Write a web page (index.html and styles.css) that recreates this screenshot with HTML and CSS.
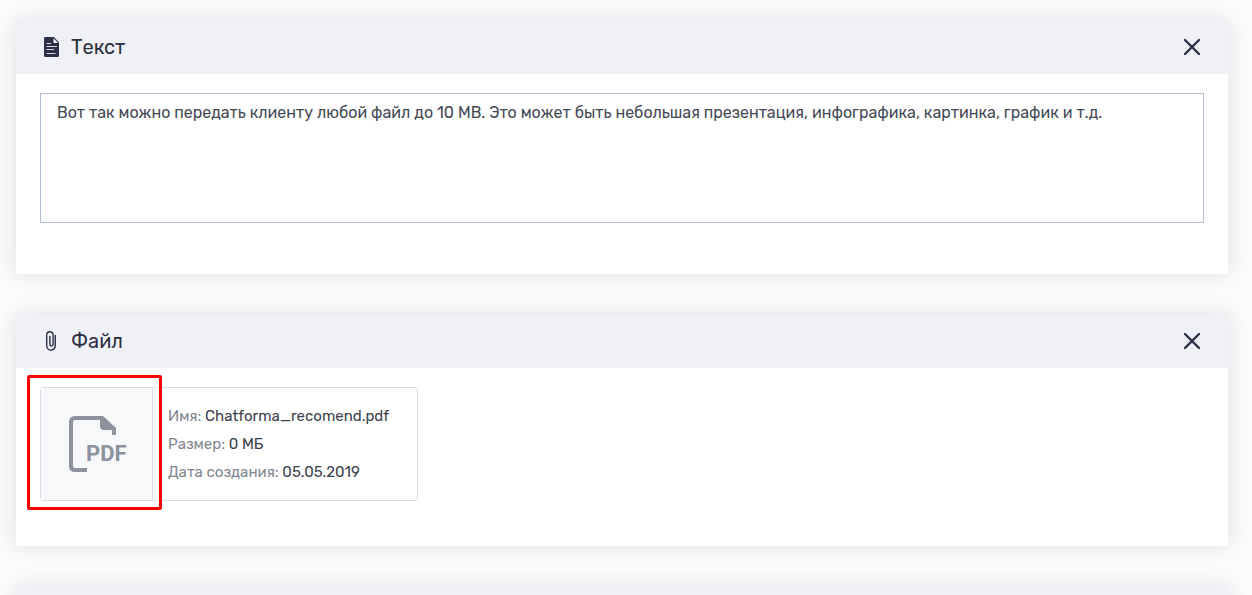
FILE: index.html
```html
<!DOCTYPE html>
<html lang="ru">
<head>
<meta charset="utf-8">
<meta name="viewport" content="width=device-width, initial-scale=1">
<title>Chatforma</title>
<link rel="stylesheet" href="styles.css">
</head>
<body>
<main class="blocks">
  <section class="card">
    <header class="card-header">
      <svg class="card-icon" viewBox="0 0 16 20" aria-hidden="true">
        <path fill="#2c2f48" d="M1.500 0H10L15 5.500V18.500a1.500 1.500 0 0 1-1.500 1.500h-12A1.500 1.500 0 0 1 0 18.500v-17A1.500 1.500 0 0 1 1.500 0z"/>
        <path fill="#f0f1f7" d="M9.500 1.200V6h4.700z"/>
        <path stroke="#d4d6e0" stroke-width="1" fill="none" d="M2.500 6.500H7M2.500 9.500H13M2.500 12.500H10M2.500 16.500H11.500"/>
      </svg>
      <h2 class="card-title" id="text-title">Текст</h2>
      <button class="close" type="button" aria-label="Закрыть">
        <svg class="close-icon" viewBox="0 0 18 18" aria-hidden="true"><path stroke-width="2.400" d="M2 2L16 16M16 2L2 16"/></svg>
      </button>
    </header>
    <div class="card-body">
      <textarea class="message" aria-labelledby="text-title" spellcheck="false">Вот так можно передать клиенту любой файл до 10 MB. Это может быть небольшая презентация, инфографика, картинка, график и т.д.</textarea>
    </div>
  </section>

  <section class="card">
    <header class="card-header">
      <svg class="card-icon" viewBox="0 0 16 20" aria-hidden="true">
        <path fill="none" stroke="#2c2f48" stroke-width="1.400" stroke-linecap="round" d="M11.300 4.500V14.500a4.300 4.600 0 0 1-8.600 0V4a3.200 3.200 0 0 1 6.400 0V13.300a1.600 1.700 0 0 1-3.200 0V5.500"/>
      </svg>
      <h2 class="card-title">Файл</h2>
      <button class="close" type="button" aria-label="Закрыть">
        <svg class="close-icon" viewBox="0 0 18 18" aria-hidden="true"><path stroke-width="2.400" d="M2 2L16 16M16 2L2 16"/></svg>
      </button>
    </header>
    <div class="card-body">
      <div class="file">
        <div class="file-preview">
          <svg class="file-icon" viewBox="0 0 58 58" role="img" aria-label="PDF">
            <path fill="none" stroke="#8d929e" stroke-width="4" d="M19 55H7Q3 55 3 51V7Q3 3 7 3H33"/>
            <path fill="#8d929e" d="M32 1H35L48 13V20H44V15H36Q32 15 32 11z"/>
            <text class="file-type" x="18" y="46">PDF</text>
          </svg>
        </div>
        <dl class="file-info">
          <div><dt>Имя:</dt> <dd>Chatforma_recomend.pdf</dd></div>
          <div><dt>Размер:</dt> <dd>0 МБ</dd></div>
          <div><dt>Дата создания:</dt> <dd>05.05.2019</dd></div>
        </dl>
      </div>
    </div>
  </section>

  <section class="card">
    <header class="card-header"></header>
  </section>
</main>
</body>
</html>
```
FILE: styles.css
```css
* {
  box-sizing: border-box;
}

body {
  margin: 0;
  height: 100vh;
  overflow: hidden;
  background: #fbfbfb;
  color: #444955;
  font-family: Rubik, Roboto, "Noto Sans", sans-serif;
}

.blocks {
  display: flex;
  flex-direction: column;
  gap: 40px;
  padding: 20px 24px 0 16px;
}

.card {
  background: #fff;
  box-shadow: 0 0 20px rgba(44, 62, 80, 0.14);
}

.card-header {
  display: flex;
  align-items: center;
  min-height: 54px;
  padding: 0 24px 0 28px;
  background: #f0f1f7;
}

.card-icon {
  width: 16px;
  height: 20px;
  margin-right: 11px;
}

.card-title {
  margin: 0;
  color: #2c2f42;
  font-size: 20px;
  font-weight: 400;
  line-height: 24px;
}

.close {
  display: flex;
  margin-left: auto;
  padding: 3px;
  border: 0;
  background: none;
  cursor: pointer;
}

.close-icon {
  width: 18px;
  height: 18px;
  fill: none;
  stroke: #2c2f48;
  stroke-linecap: round;
}

.card-body {
  padding: 19px 24px 45px;
}

.message {
  display: block;
  width: 100%;
  height: 130px;
  margin-bottom: 6px;
  padding: 9px 16px;
  border: 1px solid #b0bdd3;
  background: #fff;
  color: inherit;
  font-family: inherit;
  font-size: 16px;
  line-height: 20px;
  resize: none;
  outline: 0;
}

.file {
  display: flex;
  width: 378px;
  max-width: 100%;
  border: 1px solid #d8dae6;
  border-radius: 3px;
}

.file-preview {
  position: relative;
  display: flex;
  align-items: center;
  justify-content: center;
  width: 112px;
  height: 112px;
  border-right: 1px solid #d8dae6;
  background: #f7f8fa;
}

/* Highlight frame over the preview */
.file-preview::after {
  content: "";
  position: absolute;
  inset: -13px -10px -10px -14px;
  border: 3px solid #f00;
  border-radius: 2px;
}

.file-icon {
  width: 58px;
  height: 58px;
  overflow: visible;
}

.file-type {
  fill: #8d929e;
  font-family: Roboto, sans-serif;
  font-size: 22px;
  font-weight: 700;
}

.file-info {
  margin: 0;
  padding: 14px 15px;
  color: #3b404c;
  font-size: 15px;
  line-height: 28px;
}

.file-info dt,
.file-info dd {
  display: inline;
  margin: 0;
}

.file-info dt {
  color: #808691;
}
```
